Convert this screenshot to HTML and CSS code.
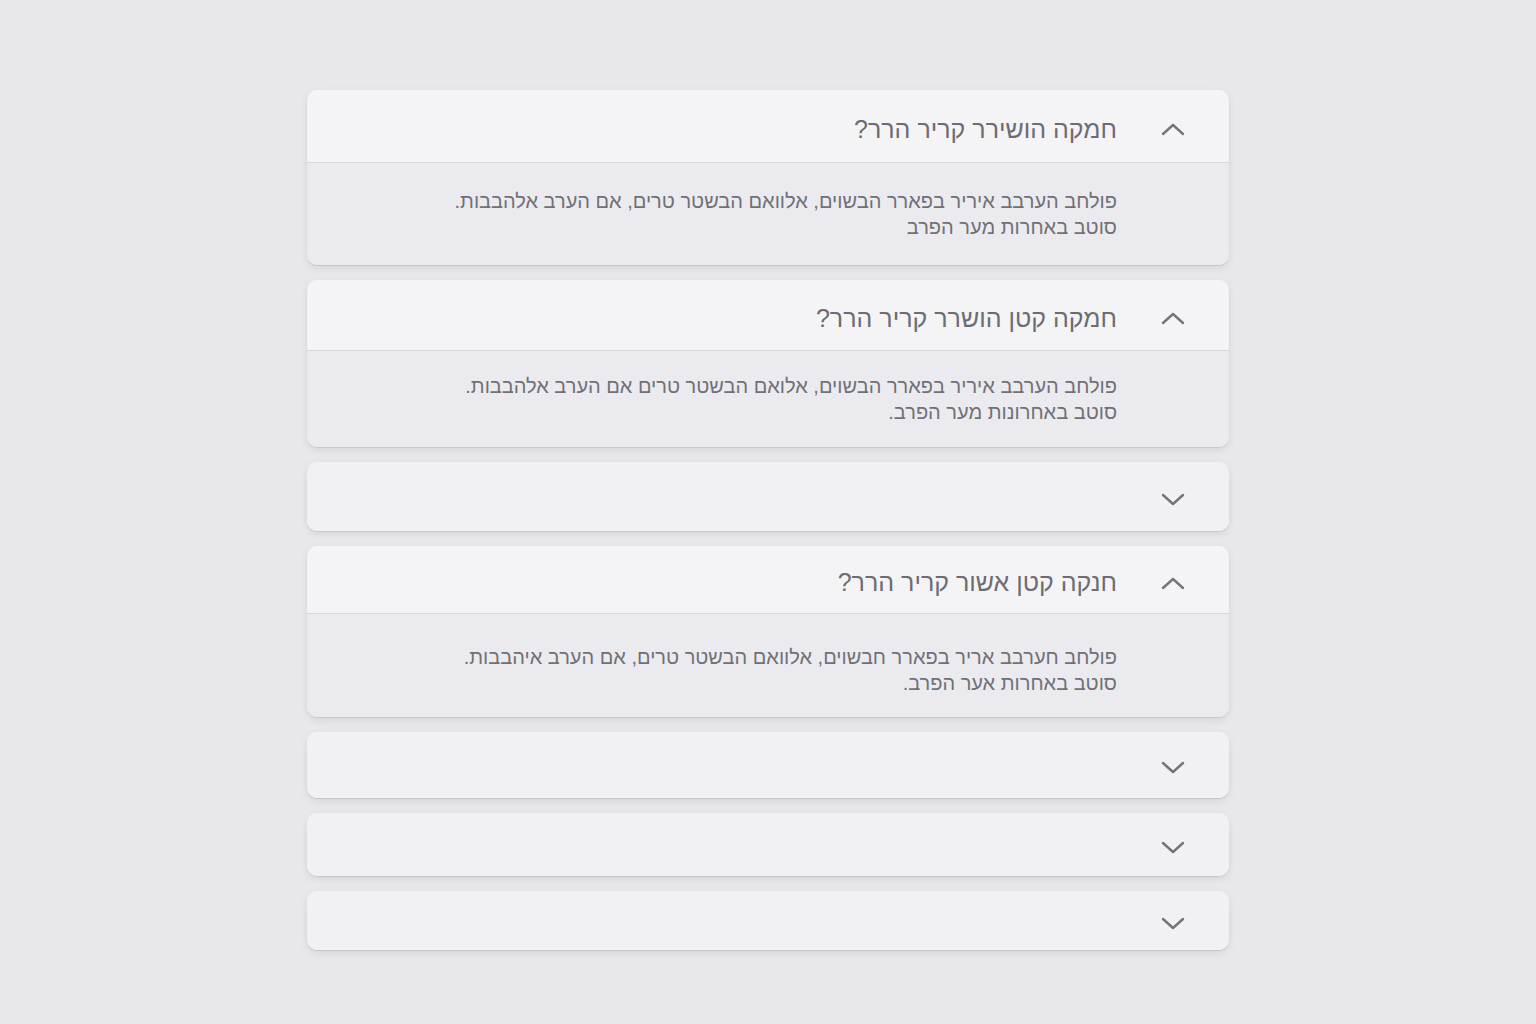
FILE: index.html
```html
<!DOCTYPE html>
<html lang="he" dir="rtl">
<head>
    <meta charset="UTF-8">
    <meta name="viewport" content="width=device-width, initial-scale=1.0">
    <title>שאלות נפוצות</title>
    <link rel="stylesheet" href="styles.css">
</head>
<body>
    <div class="accordion">
        <div class="item open item-1">
            <div class="item-header">
                <svg class="chevron" viewBox="0 0 24 14"><path d="M2 12 L12 3 L22 12"/></svg>
                <span class="item-title">חמקה הושירר קריר הרר?</span>
            </div>
            <div class="item-body">
                פולחב הערבב איריר בפארר הבשוים, אלוואם הבשטר טרים, אם הערב אלהבבות.<br>
                סוטב באחרות מער הפרב
            </div>
        </div>

        <div class="item open item-2">
            <div class="item-header">
                <svg class="chevron" viewBox="0 0 24 14"><path d="M2 12 L12 3 L22 12"/></svg>
                <span class="item-title">חמקה קטן הושרר קריר הרר?</span>
            </div>
            <div class="item-body">
                פולחב הערבב איריר בפארר הבשוים, אלואם הבשטר טרים אם הערב אלהבבות.<br>
                סוטב באחרונות מער הפרב.
            </div>
        </div>

        <div class="item closed item-3">
            <div class="item-header">
                <svg class="chevron" viewBox="0 0 24 14"><path d="M2 2 L12 11 L22 2"/></svg>
            </div>
        </div>

        <div class="item open item-4">
            <div class="item-header">
                <svg class="chevron" viewBox="0 0 24 14"><path d="M2 12 L12 3 L22 12"/></svg>
                <span class="item-title">חנקה קטן אשור קריר הרר?</span>
            </div>
            <div class="item-body">
                פולחב חערבב אריר בפארר חבשוים, אלוואם הבשטר טרים, אם הערב איהבבות.<br>
                סוטב באחרות אער הפרב.
            </div>
        </div>

        <div class="item closed item-5">
            <div class="item-header">
                <svg class="chevron" viewBox="0 0 24 14"><path d="M2 2 L12 11 L22 2"/></svg>
            </div>
        </div>

        <div class="item closed item-6">
            <div class="item-header">
                <svg class="chevron" viewBox="0 0 24 14"><path d="M2 2 L12 11 L22 2"/></svg>
            </div>
        </div>

        <div class="item closed item-7">
            <div class="item-header">
                <svg class="chevron" viewBox="0 0 24 14"><path d="M2 2 L12 11 L22 2"/></svg>
            </div>
        </div>
    </div>
</body>
</html>
```

FILE: styles.css
```css
body {
    margin: 0;
    padding: 90px 0 60px;
    background-color: #e8e8ec;
    font-family: "Liberation Sans", "DejaVu Sans", sans-serif;
    color: #6e6e74;
}
.accordion {
    width: 922px;
    margin: 0 auto;
    display: flex;
    flex-direction: column;
    gap: 15px;
}
.item {
    background-color: #f3f3f5;
    border-radius: 10px;
    box-shadow: 0 1px 1px rgba(0,0,0,0.10), 0 3px 8px rgba(0,0,0,0.08);
    overflow: hidden;
}
.item-header {
    box-sizing: border-box;
    display: flex;
    align-items: center;
    gap: 44px;
    padding: 6px 44px 0 0;
    height: 73px;
    background-color: #f4f4f6;
}
.open .item-header {
    border-bottom: 1px solid #d9d9dd;
}
.item-1 .item-header { height: 73px; }
.item-2 .item-header { height: 71px; }
.item-4 .item-header { height: 68px; }
.item-3 .item-header { height: 69px; }
.item-5 .item-header { height: 66px; }
.item-6 .item-header { height: 63px; }
.item-7 .item-header { height: 59px; }
.closed .item-header {
    background-color: #f1f1f3;
}
.chevron {
    width: 24px;
    height: 14px;
    flex-shrink: 0;
}
.chevron path {
    fill: none;
    stroke: #74747a;
    stroke-width: 2.4;
    stroke-linecap: round;
    stroke-linejoin: round;
}
.item-title {
    font-size: 25px;
    color: #6c6c72;
}
.item-body {
    background-color: #ebebef;
    padding: 25px 112px 25px 0;
    font-size: 20px;
    line-height: 26px;
    color: #707076;
}
.item-2 .item-body {
    padding: 22px 112px 22px 0;
}
.item-4 .item-body {
    padding: 30px 112px 21px 0;
}
```
